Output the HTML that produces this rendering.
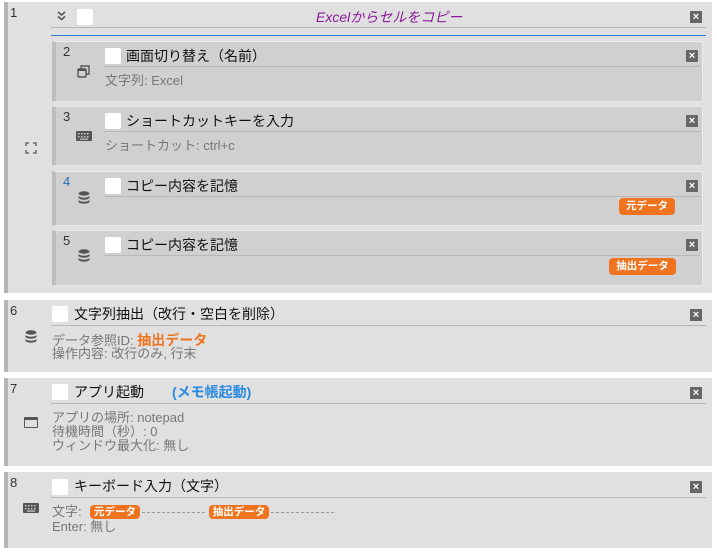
<!DOCTYPE html>
<html><head><meta charset="utf-8"><style>
*{margin:0;padding:0;box-sizing:border-box}
body{width:717px;height:554px;background:#fff;position:relative;overflow:hidden;font-family:"Liberation Sans","Noto Sans CJK JP",sans-serif;font-size:13px;color:#222}
.a{position:absolute}
.outer{position:absolute;left:4px;width:708px;background:#e0e0e0;border-left:4px solid #b5b5b5}
.inner{position:absolute;left:52px;width:651px;background:#d0d0d0;border:1px solid #ececec;border-left:4px solid #bdbdbd}
.num{position:absolute;font-size:13px;color:#333}
.cb{position:absolute;width:16px;height:16px;background:#fff;border-radius:2px}
.ttl{position:absolute;font-size:14px;color:#111;white-space:nowrap;line-height:18px}
.ln{position:absolute;height:1px;background:#b8b8b8}
.x{position:absolute;width:12px;height:12px;background:#666;color:#fff;font-size:11px;line-height:12px;text-align:center;font-weight:bold}
.ct{position:absolute;font-size:13px;color:#777;white-space:nowrap;line-height:14px}
.tag{position:absolute;background:#f07420;color:#fff;font-size:10.5px;font-weight:bold;border-radius:4px;text-align:center;line-height:17px;height:17px}
</style></head><body>
<svg width="0" height="0" style="position:absolute"><defs>
<g id="db"><ellipse cx="6" cy="2.5" rx="5.5" ry="2.2" fill="#555"/><path d="M0.5 4.5v2c0 1.2 2.5 2.2 5.5 2.2s5.5-1 5.5-2.2v-2c0 1.2-2.5 2.2-5.5 2.2S0.5 5.7 0.5 4.5z" fill="#555"/><path d="M0.5 8.5v2c0 1.2 2.5 2.2 5.5 2.2s5.5-1 5.5-2.2v-2c0 1.2-2.5 2.2-5.5 2.2S0.5 9.7 0.5 8.5z" fill="#555"/></g>
<g id="kb"><rect x="0" y="0" width="16" height="10" rx="1" fill="#555"/><g fill="#ccc"><rect x="2" y="2" width="1.5" height="1.5"/><rect x="5" y="2" width="1.5" height="1.5"/><rect x="8" y="2" width="1.5" height="1.5"/><rect x="11" y="2" width="1.5" height="1.5"/><rect x="2" y="5" width="1.5" height="1.5"/><rect x="5" y="5" width="1.5" height="1.5"/><rect x="8" y="5" width="1.5" height="1.5"/><rect x="11" y="5" width="1.5" height="1.5"/><rect x="4" y="7.5" width="8" height="1.2"/></g></g>
</defs></svg>

<div class="outer" style="top:2px;height:291px"></div>
<div class="num" style="left:10px;top:5px">1</div>
<svg class="a" style="left:57px;top:11px" width="9" height="10" viewBox="0 0 9 10" fill="none" stroke="#555" stroke-width="1.6"><path d="M1 1l3.5 3 3.5-3M1 5.5l3.5 3 3.5-3"/></svg>
<div class="cb" style="left:77px;top:9px"></div>
<div class="a" style="left:316px;top:8px;font-style:italic;color:#8a1a9a;font-size:14px;line-height:18px">Excelからセルをコピー</div>
<div class="x" style="left:690px;top:11px">×</div>
<div class="ln" style="left:51px;top:27px;width:655px"></div>
<div class="a" style="left:51px;top:35px;width:655px;height:1px;background:#2f7ad0"></div>
<svg class="a" style="left:25px;top:142px" width="12" height="12" viewBox="0 0 12 12" fill="none" stroke="#555" stroke-width="1.3"><path d="M1 4V1h3M8 1h3v3M11 8v3H8M4 11H1V8"/></svg>

<div class="inner" style="top:41px;height:61px"></div>
<div class="num" style="left:63px;top:44px">2</div>
<div class="cb" style="left:105px;top:48px"></div>
<div class="ttl" style="left:126px;top:47px">画面切り替え（名前）</div>
<div class="x" style="left:686px;top:50px">×</div>
<div class="ln" style="left:104px;top:66px;width:596px"></div>
<svg class="a" style="left:77px;top:65px" width="13" height="13" viewBox="0 0 13 13" fill="none" stroke="#555" stroke-width="1.4"><rect x="1" y="4" width="8" height="8" rx="1"/><path d="M4 4V1h8v8H9"/><path d="M1 5h8" stroke-width="2"/></svg>
<div class="ct" style="left:105px;top:74px">文字列: Excel</div>

<div class="inner" style="top:106px;height:60px"></div>
<div class="num" style="left:63px;top:109px">3</div>
<div class="cb" style="left:105px;top:113px"></div>
<div class="ttl" style="left:126px;top:112px">ショートカットキーを入力</div>
<div class="x" style="left:686px;top:115px">×</div>
<div class="ln" style="left:104px;top:131px;width:596px"></div>
<svg class="a" style="left:76px;top:131px" width="16" height="10"><use href="#kb"/></svg>
<div class="ct" style="left:105px;top:139px">ショートカット: ctrl+c</div>

<div class="inner" style="top:171px;height:55px"></div>
<div class="num" style="left:63px;top:174px;color:#2a6fb0">4</div>
<div class="cb" style="left:105px;top:178px"></div>
<div class="ttl" style="left:126px;top:177px">コピー内容を記憶</div>
<div class="x" style="left:686px;top:180px">×</div>
<div class="ln" style="left:104px;top:196px;width:596px"></div>
<svg class="a" style="left:78px;top:191px" width="12" height="14"><use href="#db"/></svg>
<div class="tag" style="left:619px;top:198px;width:56px">元データ</div>

<div class="inner" style="top:230px;height:56px"></div>
<div class="num" style="left:63px;top:233px">5</div>
<div class="cb" style="left:105px;top:237px"></div>
<div class="ttl" style="left:126px;top:236px">コピー内容を記憶</div>
<div class="x" style="left:686px;top:239px">×</div>
<div class="ln" style="left:104px;top:255px;width:596px"></div>
<svg class="a" style="left:78px;top:249px" width="12" height="14"><use href="#db"/></svg>
<div class="tag" style="left:609px;top:258px;width:67px">抽出データ</div>

<div class="outer" style="top:300px;height:72px"></div>
<div class="num" style="left:10px;top:303px">6</div>
<div class="cb" style="left:52px;top:306px"></div>
<div class="ttl" style="left:74px;top:305px">文字列抽出（改行・空白を削除）</div>
<div class="x" style="left:690px;top:309px">×</div>
<div class="ln" style="left:51px;top:325px;width:655px"></div>
<svg class="a" style="left:25px;top:330px" width="12" height="14"><use href="#db"/></svg>
<div class="ct" style="left:52px;top:333px">データ参照ID: <b style="color:#f07420;font-size:14px">抽出データ</b></div>
<div class="ct" style="left:52px;top:347px">操作内容: 改行のみ, 行末</div>

<div class="outer" style="top:378px;height:88px"></div>
<div class="num" style="left:10px;top:381px">7</div>
<div class="cb" style="left:52px;top:384px"></div>
<div class="ttl" style="left:74px;top:383px">アプリ起動　　<b style="color:#2a8ae0;font-weight:bold">(メモ帳起動)</b></div>
<div class="x" style="left:690px;top:387px">×</div>
<div class="ln" style="left:51px;top:403px;width:655px"></div>
<div class="a" style="left:24px;top:417px;width:14px;height:11px;border:1.5px solid #555;border-top-width:3px;border-radius:1px"></div>
<div class="ct" style="left:52px;top:411px">アプリの場所: notepad</div>
<div class="ct" style="left:52px;top:425px">待機時間（秒）: 0</div>
<div class="ct" style="left:52px;top:439px">ウィンドウ最大化: 無し</div>

<div class="outer" style="top:472px;height:76px"></div>
<div class="num" style="left:10px;top:475px">8</div>
<div class="cb" style="left:52px;top:479px"></div>
<div class="ttl" style="left:74px;top:477px">キーボード入力（文字）</div>
<div class="x" style="left:690px;top:481px">×</div>
<div class="ln" style="left:51px;top:497px;width:655px"></div>
<svg class="a" style="left:23px;top:503px" width="16" height="10"><use href="#kb"/></svg>
<div class="ct" style="left:52px;top:505px">文字:</div>
<div class="tag" style="left:90px;top:505px;width:50px;height:14px;line-height:14px">元データ</div>
<div class="a" style="left:142px;top:512px;width:63px;border-top:1px dashed #999"></div>
<div class="tag" style="left:209px;top:505px;width:60px;height:14px;line-height:14px">抽出データ</div>
<div class="a" style="left:271px;top:512px;width:63px;border-top:1px dashed #999"></div>
<div class="ct" style="left:52px;top:520px">Enter: 無し</div>
</body></html>
